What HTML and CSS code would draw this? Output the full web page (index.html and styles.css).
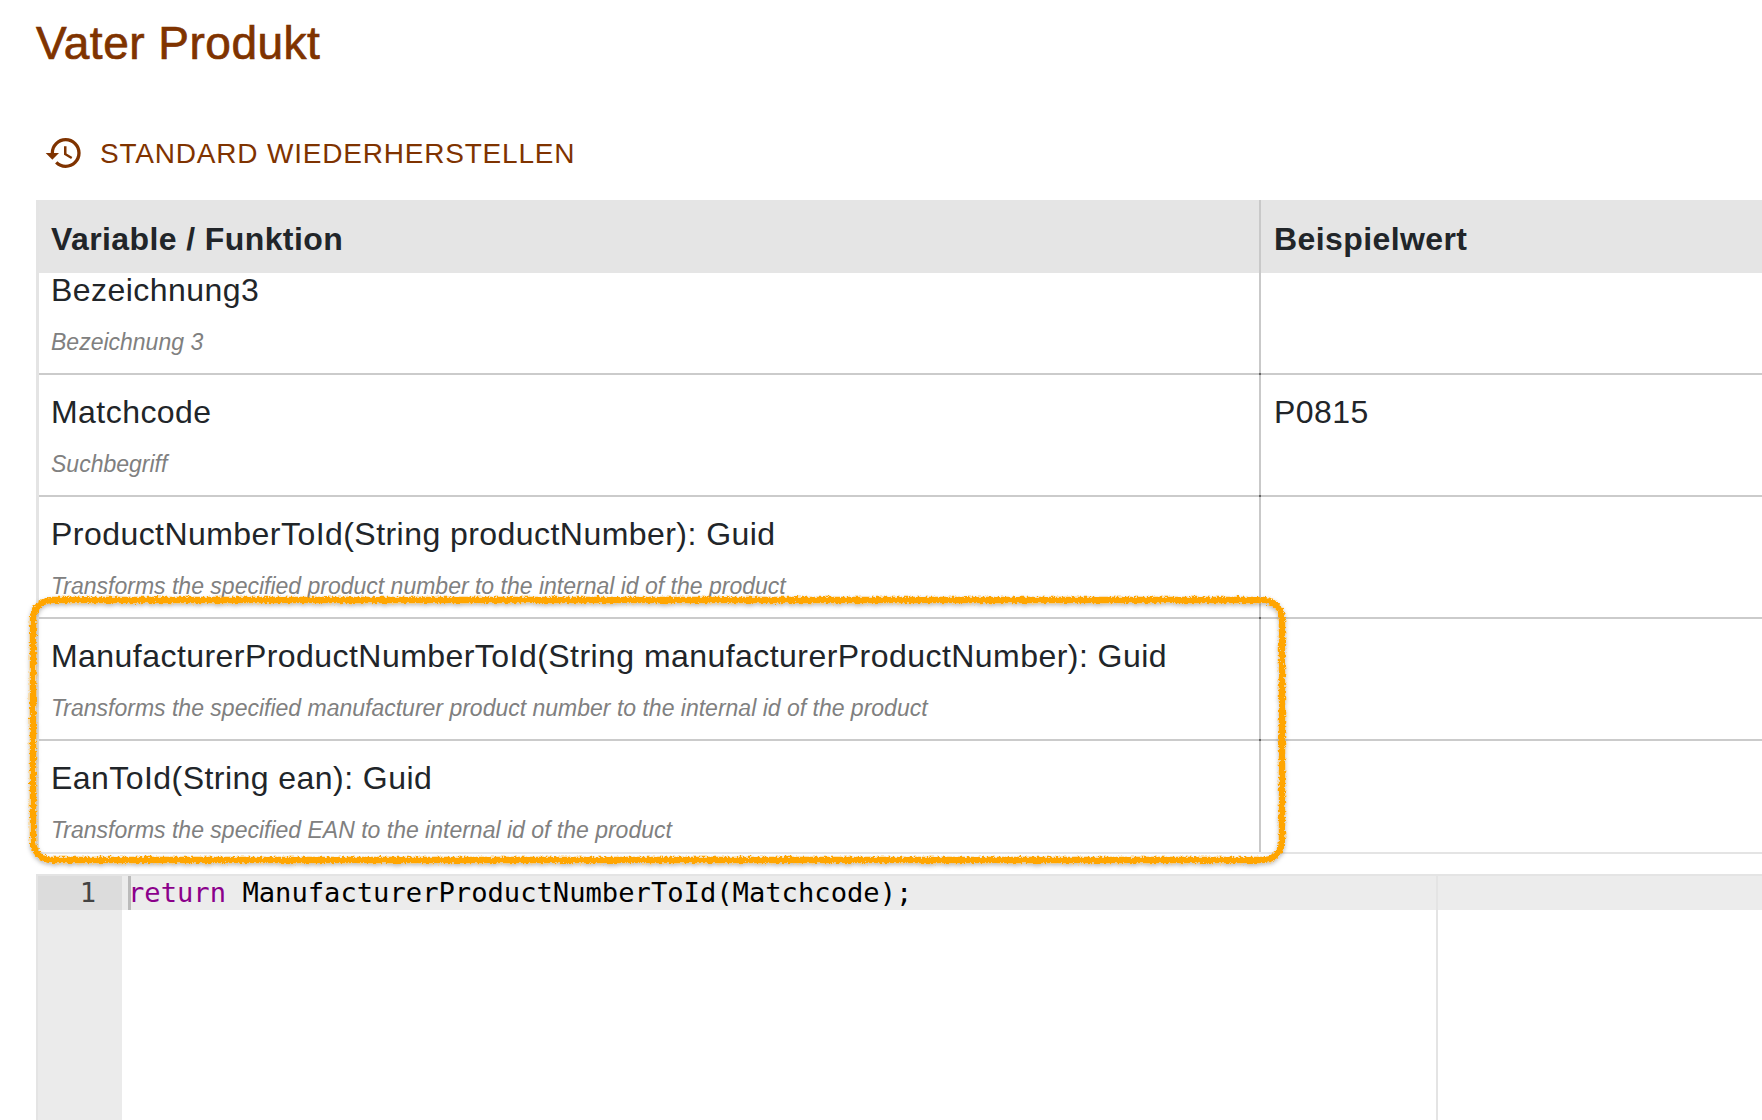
FILE: index.html
```html
<!DOCTYPE html>
<html lang="de">
<head>
<meta charset="utf-8">
<title>Vater Produkt</title>
<link rel="stylesheet" href="styles.css">
</head>
<body>
<main class="page">
  <h1 class="title">Vater Produkt</h1>
  <button class="restore" type="button">
    <svg class="restore-icon" viewBox="0 0 24 24" aria-hidden="true"><path d="M13 3a9 9 0 0 0-9 9H1l3.89 3.89.07.14L9 12H6c0-3.87 3.13-7 7-7s7 3.13 7 7-3.13 7-7 7c-1.93 0-3.68-.79-4.94-2.06l-1.42 1.42A8.954 8.954 0 0 0 13 21a9 9 0 0 0 0-18zm-1 5v5l4.28 2.54.72-1.21-3.5-2.08V8H12z"/></svg>
    <span class="restore-text">STANDARD WIEDERHERSTELLEN</span>
  </button>
  <section class="grid">
    <div class="row head">
      <div class="cell name">Variable / Funktion</div>
      <div class="cell value">Beispielwert</div>
    </div>
    <div class="rows">
      <div class="row item scrolled">
        <div class="cell name"><div class="label">Bezeichnung3</div><div class="hint">Bezeichnung 3</div></div>
        <div class="cell value"></div>
      </div>
      <div class="row item">
        <div class="cell name"><div class="label">Matchcode</div><div class="hint">Suchbegriff</div></div>
        <div class="cell value"><div class="label">P0815</div></div>
      </div>
      <div class="row item">
        <div class="cell name"><div class="label">ProductNumberToId(String productNumber): Guid</div><div class="hint">Transforms the specified product number to the internal id of the product</div></div>
        <div class="cell value"></div>
      </div>
      <div class="row item">
        <div class="cell name"><div class="label">ManufacturerProductNumberToId(String manufacturerProductNumber): Guid</div><div class="hint">Transforms the specified manufacturer product number to the internal id of the product</div></div>
        <div class="cell value"></div>
      </div>
      <div class="row item last">
        <div class="cell name"><div class="label">EanToId(String ean): Guid</div><div class="hint">Transforms the specified EAN to the internal id of the product</div></div>
        <div class="cell value"></div>
      </div>
    </div>
  </section>
  <section class="editor">
    <div class="gutter"><div class="line-no">1</div></div>
    <div class="code">
      <div class="code-line"><span class="kw">return</span> ManufacturerProductNumberToId(Matchcode);</div>
      <div class="margin-line"></div>
    </div>
  </section>
</main>
<svg class="marker" width="1762" height="1120" viewBox="0 0 1762 1120" aria-hidden="true">
  <defs>
    <filter id="rough" x="-5%" y="-5%" width="110%" height="110%">
      <feTurbulence type="fractalNoise" baseFrequency="0.4" numOctaves="3" seed="4" result="n"/>
      <feDisplacementMap in="SourceGraphic" in2="n" scale="5" xChannelSelector="R" yChannelSelector="G"/>
      <feDropShadow dx="0" dy="2" stdDeviation="2" flood-color="#000" flood-opacity="0.28"/>
    </filter>
  </defs>
  <rect class="marker-rect" x="33" y="600" width="1249" height="260" rx="19" filter="url(#rough)"/>
</svg>
</body>
</html>
```
FILE: styles.css
```css
html, body {
  margin: 0;
  height: 1120px;
  overflow: hidden;
  background: #fff;
}
body {
  font-family: "Liberation Sans", Arial, sans-serif;
  color: #212529;
}
.page {
  padding: 0 0 0 37px;
  display: flex;
  flex-direction: column;
  height: 1120px;
  box-sizing: border-box;
}
.title {
  margin: 18px 0 0 -1px;
  font-size: 46px;
  line-height: 50px;
  letter-spacing: 0.5px;
  font-weight: 400;
  color: #7f3300;
  -webkit-text-stroke: 0.7px #7f3300;
}
.restore {
  align-self: flex-start;
  margin: 64px 0 0 7px;
  padding: 0;
  border: 0;
  background: none;
  display: flex;
  align-items: flex-start;
  gap: 16px;
  font: inherit;
  font-size: 28px;
  line-height: 40px;
  letter-spacing: 0.8px;
  color: #7f3300;
}
.restore-text {
  padding-top: 2px;
}
.restore-icon {
  width: 40px;
  height: 40px;
  margin-top: 1px;
  fill: #7f3300;
}
.grid {
  margin-top: 26px;
  border-left: 3px solid #e4e4e4;
  margin-left: -1px;
  height: 654px;
  box-sizing: border-box;
  display: flex;
  flex-direction: column;
}
.row {
  display: grid;
  grid-template-columns: 1222px 1fr;
}
.head {
  height: 73px;
  background: #e5e5e5;
  flex: none;
  font-size: 32px;
  letter-spacing: 0.4px;
  font-weight: 700;
}
.head .cell {
  padding-top: 21px;
  line-height: 36px;
  box-sizing: border-box;
}
.rows {
  overflow: hidden;
  flex: 1;
}
.item {
  height: 122px;
  box-sizing: border-box;
  border-bottom: 2px solid #cbcbcb;
}
.item.scrolled {
  height: 102px;
}
.item.scrolled .label {
  padding-top: 0;
  line-height: 34px;
}
.item.scrolled .hint {
  margin-top: 21px;
}
.item.last {
  height: 113px;
  border-bottom-color: #e4e4e4;
}
.cell {
  padding-left: 12px;
}
.value {
  padding-left: 13px;
}
.name {
  position: relative;
  border-right: 2px solid #c9c9c9;
}
.item:not(.last) .name::after {
  content: "";
  position: absolute;
  right: -2px;
  bottom: -2px;
  width: 2px;
  height: 2px;
  background: #666;
}
.label {
  padding-top: 16px;
  font-size: 32px;
  line-height: 42px;
  letter-spacing: 0.45px;
}
.hint {
  margin-top: 17px;
  font-size: 23px;
  line-height: 28px;
  font-style: italic;
  color: #808080;
}
.editor {
  margin-left: -1px;
  margin-top: 20px;
  flex: 1;
  display: flex;
  border-left: 2px solid #e4e4e4;
  border-top: 2px solid #e4e4e4;
  font-family: "DejaVu Sans Mono", monospace;
  font-size: 27.15px;
  line-height: 34px;
}
.gutter {
  width: 84px;
  flex: none;
  background: #ebebeb;
}
.line-no {
  background: #dcdcdc;
  height: 34px;
  box-sizing: border-box;
  padding-right: 26px;
  text-align: right;
  color: #444;
}
.code {
  flex: 1;
  position: relative;
  padding-left: 6px;
}
.code-line {
  margin-left: -6px;
  padding-left: 6px;
  height: 34px;
  background: #ececec;
  color: #000;
  white-space: pre;
  position: relative;
}
.code-line::before {
  content: "";
  position: absolute;
  left: 6px;
  top: 0;
  width: 3px;
  height: 34px;
  background: #bbb;
}
.kw {
  color: #8b008b;
}
.margin-line {
  position: absolute;
  top: 0;
  bottom: 0;
  left: 1314px;
  width: 2px;
  background: #e4e4e4;
}
.marker {
  position: absolute;
  left: 0;
  top: 0;
  pointer-events: none;
}
.marker-rect {
  fill: none;
  stroke: #ffa500;
  stroke-width: 6.5;
}
```
